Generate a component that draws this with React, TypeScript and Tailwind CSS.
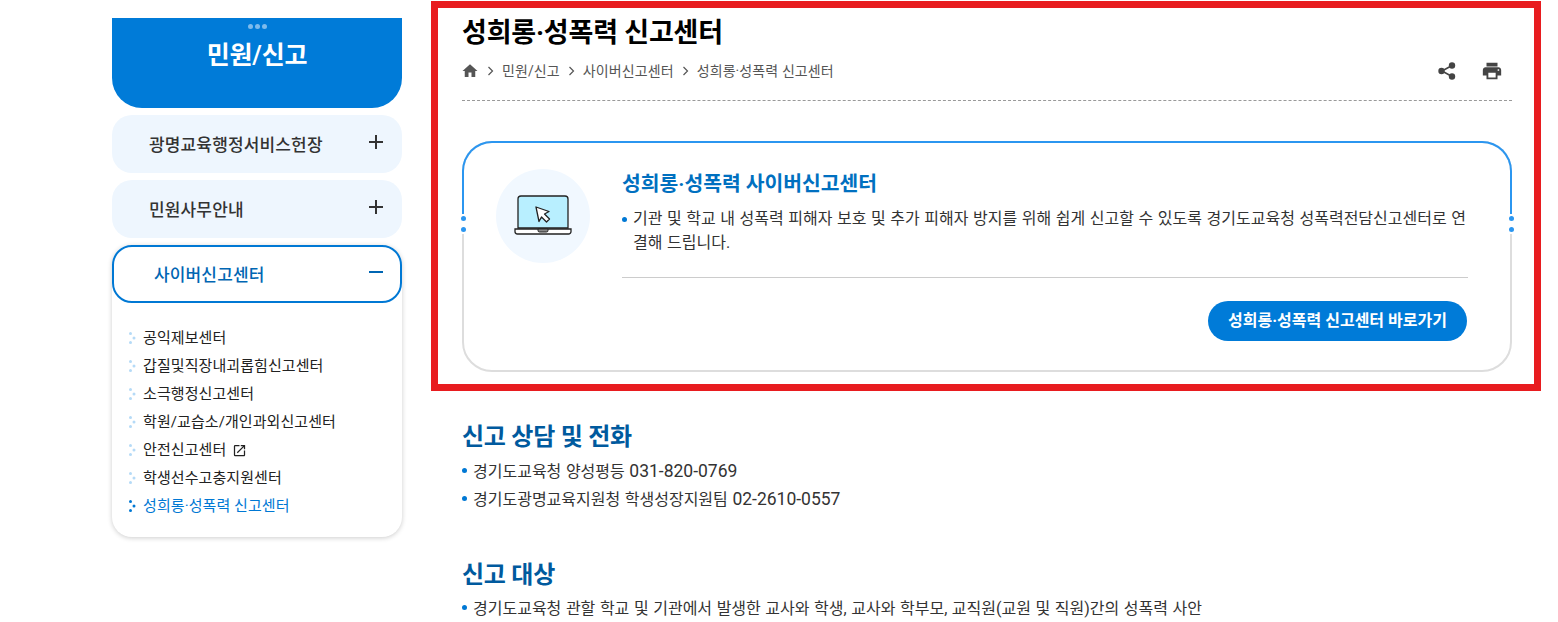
import { MdHome, MdPrint, MdOpenInNew } from "react-icons/md";

const subMenu = [
  "공익제보센터",
  "갑질및직장내괴롭힘신고센터",
  "소극행정신고센터",
  "학원/교습소/개인과외신고센터",
  "안전신고센터",
  "학생선수고충지원센터",
  "성희롱·성폭력 신고센터",
];

function DotBullet({ active }: { active: boolean }) {
  const fill = active ? "#0078d4" : "#b5daf7";
  return (
    <svg width="7" height="12" viewBox="0 0 7 12" className="shrink-0">
      <circle cx="1.5" cy="1.5" r="1.5" fill={fill} />
      <circle cx="5" cy="6" r="1.5" fill={fill} />
      <circle cx="1.5" cy="10.5" r="1.5" fill={fill} />
    </svg>
  );
}

function Chevron() {
  return (
    <svg width="7" height="10" viewBox="0 0 7 10" className="mx-[8px] shrink-0">
      <path d="M1.5 1l4 4-4 4" fill="none" stroke="#555" strokeWidth="1.2" />
    </svg>
  );
}

function Toggle({ open }: { open?: boolean }) {
  return (
    <svg width="14" height="14" viewBox="0 0 14 14" className="mt-[-4px] shrink-0">
      <path d="M0 7h14" stroke={open ? "#0066b3" : "#333"} strokeWidth="2" />
      {!open && <path d="M7 0v14" stroke="#333" strokeWidth="2" />}
    </svg>
  );
}

function ShareIcon() {
  return (
    <svg width="18" height="18" viewBox="0 0 18 18">
      <path d="M14 3.500 4 9l10 5.500" fill="none" stroke="#444" strokeWidth="1.600" />
      <circle cx="14" cy="3.500" r="3.200" fill="#444" />
      <circle cx="3.500" cy="9" r="3.200" fill="#444" />
      <circle cx="14" cy="14.500" r="3.200" fill="#444" />
    </svg>
  );
}

function Laptop() {
  return (
    <svg width="58" height="42" viewBox="0 0 58 42">
      <path d="M4 33V4a3 3 0 0 1 3-3h44a3 3 0 0 1 3 3v29z" fill="#b8efff" stroke="#222" strokeWidth="1.3" />
      <path d="M1 34h56v2.500a2.500 2.500 0 0 1-2.500 2.500h-51A2.500 2.500 0 0 1 1 36.500z" fill="#fff" stroke="#222" strokeWidth="1.3" />
      <path d="M24 34h10v1.500a1.500 1.500 0 0 1-1.500 1.500h-7a1.500 1.500 0 0 1-1.500-1.500z" fill="#888" stroke="#222" strokeWidth="1" />
      <path d="M22 12l13 4.500-4.500 2.500 5 5-3 3-5-5-2.500 4.500z" fill="#fff" stroke="#222" strokeWidth="1.300" strokeLinejoin="round" />
    </svg>
  );
}

function Bullet({ children }: { children: React.ReactNode }) {
  return (
    <li className="flex">
      <span className="mt-[10px] mr-[6px] size-[5px] shrink-0 rounded-full bg-[#0078d4]" />
      <span className="[word-spacing:0.6px]">{children}</span>
    </li>
  );
}

export default function App() {
  return (
    <div className="relative h-[622px] overflow-hidden bg-white font-['Roboto','Noto_Sans_CJK_KR',sans-serif] text-[#333]">
      <div className="flex pl-[112px]">
        <aside className="mt-[18px] w-[290px] shrink-0">
          <div className="relative flex h-[90px] flex-col items-center rounded-b-[30px] bg-[#007bd8] pt-[6px]">
            <div className="flex gap-[2px]">
              <span className="size-[5px] rounded-full bg-[#7dbbec]" />
              <span className="size-[5px] rounded-full bg-[#7dbbec]" />
              <span className="size-[5px] rounded-full bg-[#7dbbec]" />
            </div>
            <h2 className="mt-[8px] text-[25px] leading-[38px] font-semibold tracking-[-0.2px] text-white">민원/신고</h2>
          </div>
          <div className="mt-[7px] flex h-[58px] items-center justify-between rounded-[20px] bg-[#eef6fe] pr-[19px] pl-[37px] text-[17px] font-medium tracking-[0.15px] text-[#333]">
            <span className="mt-[4px]">광명교육행정서비스헌장</span>
            <Toggle />
          </div>
          <div className="mt-[7px] flex h-[58px] items-center justify-between rounded-[20px] bg-[#eef6fe] pr-[19px] pl-[37px] text-[17px] font-medium tracking-[0.15px] text-[#333]">
            <span className="mt-[4px]">민원사무안내</span>
            <Toggle />
          </div>
          <div className="mt-[7px] rounded-[20px] bg-white pb-[17px] shadow-[0_1px_5px_rgba(0,0,0,0.2)]">
            <div className="flex h-[58px] items-center justify-between rounded-[20px] border-2 border-[#0078d4] bg-white pr-[17px] pl-[40px] text-[17px] font-medium tracking-[0.15px] text-[#0066b3]">
              <span className="mt-[4px]">사이버신고센터</span>
              <Toggle open />
            </div>
            <ul className="mt-[21px] pl-[17px] text-[15px] leading-[28px] tracking-[0.08px] text-[#222]">
              {subMenu.map((item, i) => (
                <li key={item} className={`flex items-center gap-[7px] ${i === 6 ? "text-[#0078d4]" : ""}`}>
                  <DotBullet active={i === 6} />
                  {item}
                  {i === 4 && <MdOpenInNew className="-ml-[1px] text-[15px]" />}
                </li>
              ))}
            </ul>
          </div>
        </aside>

        <main className="ml-[60px] w-[1050px] shrink-0 pt-[14px]">
          <h1 className="text-[27px] leading-[38px] font-bold tracking-[-0.2px] text-black">성희롱·성폭력 신고센터</h1>
          <div className="mt-[4px] flex h-[30px] items-center justify-between text-[14px] tracking-[0.1px] text-[#555]">
            <div className="flex items-center">
              <MdHome className="ml-[-1px] text-[18px] text-[#555]" />
              <Chevron />
              민원/신고
              <Chevron />
              사이버신고센터
              <Chevron />
              성희롱·성폭력 신고센터
            </div>
            <div className="flex items-center gap-[25px] pr-[9px] text-[#444]">
              <ShareIcon />
              <MdPrint className="text-[22px]" />
            </div>
          </div>
          <div className="mt-[14px] border-b border-dashed border-[#999]" />

          <section className="relative mt-[40px] flex h-[231px] rounded-[30px] border-2 border-[#ddd] bg-white pt-[26px] pr-[42px] pl-[32px]">
            <div className="absolute -top-[2px] -right-[2px] -left-[2px] h-[80px] rounded-t-[30px] border-2 border-b-0 border-[#2b96f0]" />
            <div className="absolute top-[71px] -left-[2px] flex h-[20px] w-[2px] flex-col items-center justify-between bg-white py-[2px]">
              <span className="size-[5px] shrink-0 rounded-full bg-[#2b96f0]" />
              <span className="size-[5px] shrink-0 rounded-full bg-[#2b96f0]" />
            </div>
            <div className="absolute top-[71px] -right-[2px] flex h-[20px] w-[2px] flex-col items-center justify-between bg-white py-[2px]">
              <span className="size-[5px] shrink-0 rounded-full bg-[#2b96f0]" />
              <span className="size-[5px] shrink-0 rounded-full bg-[#2b96f0]" />
            </div>
            <div className="flex size-[94px] shrink-0 items-center justify-center rounded-full bg-[#f1f8ff]">
              <Laptop />
            </div>
            <div className="ml-[32px] flex-1 pt-[1px]">
              <h3 className="text-[20.400px] leading-[28px] font-bold text-[#0070c0]">성희롱·성폭력 사이버신고센터</h3>
              <ul className="mt-[9px] text-[16px] leading-[24px] text-[#333]">
                <Bullet>기관 및 학교 내 성폭력 피해자 보호 및 추가 피해자 방지를 위해 쉽게 신고할 수 있도록 경기도교육청 성폭력전담신고센터로 연결해 드립니다.</Bullet>
              </ul>
              <div className="mt-[22px] border-b border-[#ccc]" />
              <div className="mt-[23px] flex justify-end pr-[1px]">
                <a className="flex h-[40px] w-[259px] items-center justify-center rounded-full bg-[#007bd8] text-[16px] font-bold text-white">성희롱·성폭력 신고센터 바로가기</a>
              </div>
            </div>
          </section>

          <h3 className="mt-[47px] text-[24px] leading-[36px] font-bold tracking-[-0.25px] text-[#005a9e]">신고 상담 및 전화</h3>
          <ul className="mt-[3px] text-[16px] leading-[28px] text-[#333]">
            <Bullet>경기도교육청 양성평등 <span className="text-[17.500px] leading-none">031-820-0769</span></Bullet>
            <Bullet>경기도광명교육지원청 학생성장지원팀 <span className="text-[17.500px] leading-none">02-2610-0557</span></Bullet>
          </ul>
          <h3 className="mt-[43px] text-[24px] leading-[36px] font-bold tracking-[-0.25px] text-[#005a9e]">신고 대상</h3>
          <ul className="mt-[2px] text-[16px] leading-[28px] text-[#333]">
            <Bullet>경기도교육청 관할 학교 및 기관에서 발생한 교사와 학생, 교사와 학부모, 교직원(교원 및 직원)간의 성폭력 사안</Bullet>
          </ul>
        </main>
      </div>

      <div className="pointer-events-none absolute top-[1px] left-[431px] h-[390px] w-[1110px] border-[7px] border-[#e81c1f]" />
    </div>
  );
}
